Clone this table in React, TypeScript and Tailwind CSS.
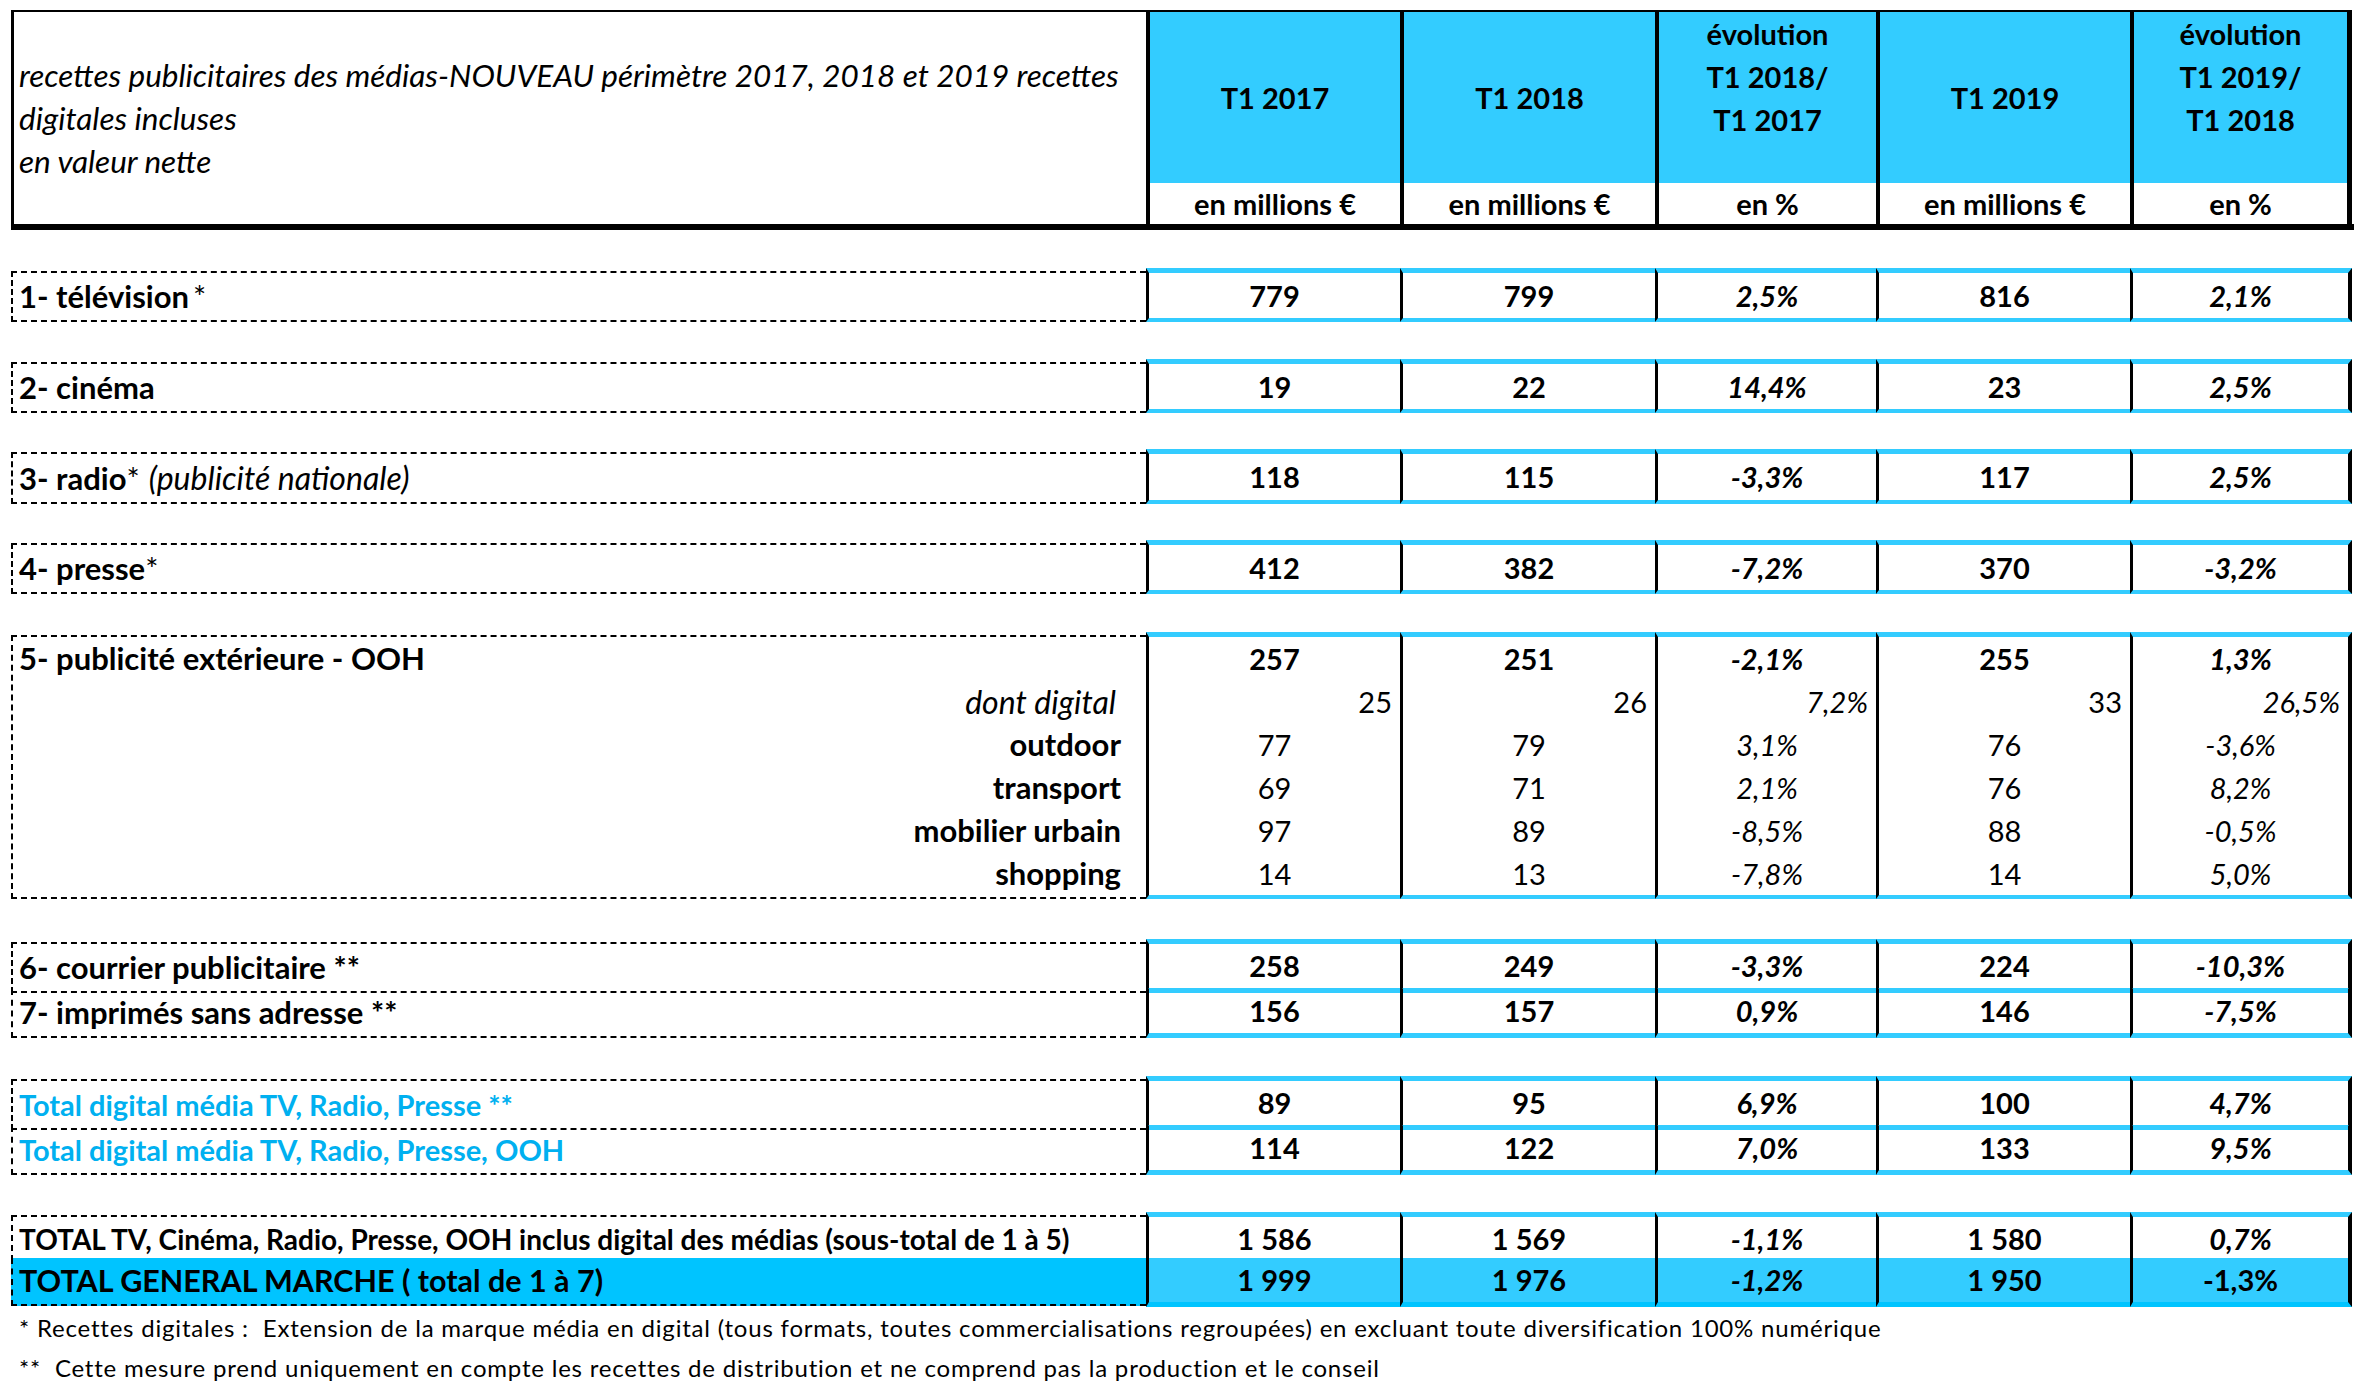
import React from "react";

const GRID = "grid grid-cols-[1135px_254px_255px_221px_254px_222px]";

type V = React.ReactNode;

const NUM = "font-bold";
const PCT = "font-bold italic";
const STD = [NUM, NUM, PCT, NUM, PCT];

function Cells({
  vals,
  cellCls,
  valCls = STD,
}: {
  vals: V[];
  cellCls: string;
  valCls?: string[];
}) {
  return (
    <>
      {vals.map((v, i) => (
        <div
          key={i}
          className={`${cellCls} ${i === 4 ? "border-r-[4px] border-r-black" : ""} flex items-center justify-center`}
        >
          <span className={valCls[i]}>{v}</span>
        </div>
      ))}
    </>
  );
}

const CYAN_TB =
  "border-l-[3px] border-l-black border-t-[5px] border-t-[#33ccff] border-b-[4px] border-b-[#33ccff]";

function SingleRow({ label, vals }: { label: V; vals: V[] }) {
  return (
    <div className={`${GRID} h-[49px]`}>
      <div className="mt-[3px] border-2 border-r-0 border-dashed border-black flex items-center pl-[6px] font-bold text-[31px] whitespace-nowrap">
        {label}
      </div>
      <Cells vals={vals} cellCls={CYAN_TB} />
    </div>
  );
}

function DoubleRow({
  labels,
  vals,
  labelCls,
}: {
  labels: [V, V];
  vals: [V[], V[]];
  labelCls: string;
}) {
  return (
    <div>
      <div className={`${GRID} h-[50px]`}>
        <div
          className={`mt-[3px] border-2 border-r-0 border-dashed border-black flex items-center pl-[6px] font-bold whitespace-nowrap ${labelCls}`}
        >
          {labels[0]}
        </div>
        <Cells
          vals={vals[0]}
          cellCls="border-l-[3px] border-l-black border-t-[5px] border-t-[#33ccff] border-b-[5px] border-b-[#33ccff]"
        />
      </div>
      <div className={`${GRID} h-[46px]`}>
        <div
          className={`border-l-2 border-b-2 border-dashed border-black flex items-center pl-[6px] font-bold whitespace-nowrap ${labelCls}`}
        >
          {labels[1]}
        </div>
        <Cells
          vals={vals[1]}
          cellCls="border-l-[3px] border-l-black border-b-[5px] border-b-[#33ccff]"
        />
      </div>
    </div>
  );
}

const ooh = {
  labels: ["dont digital", "outdoor", "transport", "mobilier urbain", "shopping"],
  cols: [
    ["257", "25", "77", "69", "97", "14"],
    ["251", "26", "79", "71", "89", "13"],
    ["-2,1%", "7,2%", "3,1%", "2,1%", "-8,5%", "-7,8%"],
    ["255", "33", "76", "76", "88", "14"],
    ["1,3%", "26,5%", "-3,6%", "8,2%", "-0,5%", "5,0%"],
  ],
};

function OOHGroup() {
  return (
    <div className={`${GRID} h-[267px]`}>
      <div className="mt-[3px] border-2 border-r-0 border-dashed border-black flex flex-col">
        <div className="h-[43px] flex items-center pl-[6px] font-bold text-[31px] whitespace-nowrap">
          5- publicité extérieure - OOH
        </div>
        <div className="h-[43px] flex items-center justify-end pr-[30px] italic text-[32px]">
          dont digital
        </div>
        {ooh.labels.slice(1).map((l) => (
          <div key={l} className="h-[43px] flex items-center justify-end pr-[25px] font-bold text-[31px]">
            {l}
          </div>
        ))}
      </div>
      {ooh.cols.map((col, ci) => {
        const pct = ci === 2 || ci === 4;
        return (
          <div
            key={ci}
            className={`${CYAN_TB} ${ci === 4 ? "border-r-[4px] border-r-black" : ""} flex flex-col`}
          >
            {col.map((v, ri) => (
              <div
                key={ri}
                className={
                  ri === 1
                    ? `h-[43px] flex items-center justify-end pr-[8px] ${pct ? "italic" : ""}`
                    : `h-[43px] flex items-center justify-center ${ri === 0 ? "font-bold" : ""} ${pct ? "italic" : ""}`
                }
              >
                {v}
              </div>
            ))}
          </div>
        );
      })}
    </div>
  );
}

function Header() {
  const heads: { lines: string[]; evol: boolean }[] = [
    { lines: ["T1 2017"], evol: false },
    { lines: ["T1 2018"], evol: false },
    { lines: ["évolution", "T1 2018/", "T1 2017"], evol: true },
    { lines: ["T1 2019"], evol: false },
    { lines: ["évolution", "T1 2019/", "T1 2018"], evol: true },
  ];
  const units = ["en millions €", "en millions €", "en %", "en millions €", "en %"];
  return (
    <>
      <div className={GRID}>
        <div className="row-span-2 border-t-2 border-l-[3px] border-black flex flex-col justify-center pl-[5px] italic text-[31.5px] leading-[43px] whitespace-nowrap">
          <div>recettes publicitaires des médias-NOUVEAU périmètre 2017, 2018 et 2019 recettes</div>
          <div>digitales incluses</div>
          <div>en valeur nette</div>
        </div>
        {heads.map((h, i) => (
          <div
            key={i}
            className={`h-[173px] bg-[#33ccff] border-t-2 border-t-black border-l-[4px] border-l-black ${
              i === 4 ? "border-r-[5px] border-r-black" : ""
            } flex flex-col items-center ${h.evol ? "justify-start" : "justify-center"} font-bold leading-[43px]`}
          >
            {h.lines.map((l) => (
              <div key={l}>{l}</div>
            ))}
          </div>
        ))}
        {units.map((u, i) => (
          <div
            key={i}
            className={`h-[41px] border-l-[4px] border-l-black ${
              i === 4 ? "border-r-[5px] border-r-black" : ""
            } flex items-center justify-center font-bold`}
          >
            {u}
          </div>
        ))}
      </div>
      <div className="h-[6px] w-[2343px] bg-black" />
    </>
  );
}

const Ast = ({ s }: { s: string }) => <span className="font-normal ml-[4px]">{s}</span>;

export default function App() {
  return (
    <div className="w-[2368px] h-[1388px] bg-white pl-[11px] pt-[10px] font-['Lato',sans-serif] text-black text-[29px] overflow-hidden">
      <div className="w-[2341px]">
        <Header />
        <div className="h-[38px]" />
        <SingleRow
          label={
            <>
              1- télévision<Ast s="*" />
            </>
          }
          vals={["779", "799", "2,5%", "816", "2,1%"]}
        />
        <div className="h-[42px]" />
        <SingleRow label="2- cinéma" vals={["19", "22", "14,4%", "23", "2,5%"]} />
        <div className="h-[41px]" />
        <SingleRow
          label={
            <>
              3- radio<span className="font-normal">*</span>
              <span className="font-normal italic text-[32px] ml-[9px]">(publicité nationale)</span>
            </>
          }
          vals={["118", "115", "-3,3%", "117", "2,5%"]}
        />
        <div className="h-[42px]" />
        <SingleRow
          label={
            <>
              4- presse<span className="font-normal">*</span>
            </>
          }
          vals={["412", "382", "-7,2%", "370", "-3,2%"]}
        />
        <div className="h-[43px]" />
        <OOHGroup />
        <div className="h-[40px]" />
        <DoubleRow
          labelCls="text-[31px]"
          labels={["6- courrier publicitaire **", "7- imprimés sans adresse **"]}
          vals={[
            ["258", "249", "-3,3%", "224", "-10,3%"],
            ["156", "157", "0,9%", "146", "-7,5%"],
          ]}
        />
        <div className="h-[41px]" />
        <DoubleRow
          labelCls="text-[#00b0f0] text-[29px]"
          labels={["Total digital média TV, Radio, Presse **", "Total digital média TV, Radio, Presse, OOH"]}
          vals={[
            ["89", "95", "6,9%", "100", "4,7%"],
            ["114", "122", "7,0%", "133", "9,5%"],
          ]}
        />
        <div className="h-[40px]" />
        <div>
          <div className={`${GRID} h-[46px]`}>
            <div className="mt-[3px] border-t-2 border-l-2 border-dashed border-black flex items-center pl-[6px] font-bold text-[28px] whitespace-nowrap">
              TOTAL TV, Cinéma, Radio, Presse, OOH inclus digital des médias (sous-total de 1 à 5)
            </div>
            <Cells
              vals={["1 586", "1 569", "-1,1%", "1 580", "0,7%"]}
              cellCls="border-l-[3px] border-l-black border-t-[5px] border-t-[#33ccff]"
            />
          </div>
          <div className={`${GRID} h-[48px]`}>
            <div className="mb-[1px] bg-[#00c4ff] border-l-2 border-b-2 border-dashed border-black flex items-center pl-[6px] font-bold text-[30.5px] whitespace-nowrap">
              TOTAL GENERAL MARCHE ( total de 1 à 7)
            </div>
            <Cells
              vals={["1 999", "1 976", "-1,2%", "1 950", "-1,3%"]}
              cellCls="bg-[#33ccff] border-l-[3px] border-l-black border-b-[5px] border-b-[#00c4ff]"
              valCls={[NUM, NUM, PCT, NUM, NUM]}
            />
          </div>
        </div>
        <div className="mt-[2px] h-[40px] flex items-center pl-[8px] text-[24px] tracking-[0.8px] whitespace-nowrap">
          * Recettes digitales :&nbsp; Extension de la marque média en digital (tous formats, toutes commercialisations regroupées) en excluant toute diversification 100% numérique
        </div>
        <div className="h-[40px] flex items-center pl-[8px] text-[24px] tracking-[0.8px] whitespace-nowrap">
          **&nbsp; Cette mesure prend uniquement en compte les recettes de distribution et ne comprend pas la production et le conseil
        </div>
      </div>
    </div>
  );
}
